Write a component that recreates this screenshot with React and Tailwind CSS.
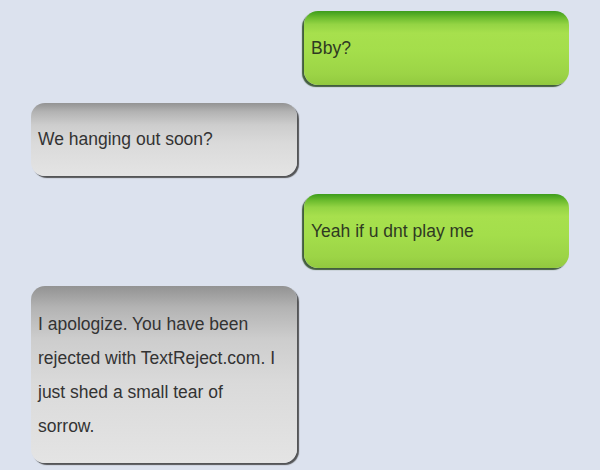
export default function App() {
  const green =
    "ml-[304px] w-[265px] rounded-[14px] flex items-center pl-[7px] pr-2 text-[#2f3a22] shadow-[-2px_2px_1px_rgba(40,70,30,0.85)] bg-[linear-gradient(to_bottom,#3d9c1c_0%,#6cbc2e_9%,#94d444_18%,#a7e04d_30%,#a4de4b_55%,#9cd446_85%,#92c93f_100%)]";
  const gray =
    "ml-[31px] w-[266px] rounded-[14px] flex items-center pl-[7px] pr-2 text-[#333] shadow-[2px_2px_1px_rgba(60,60,60,0.85)] bg-[linear-gradient(to_bottom,#939393_0%,#b3b3b3_12%,#cdcdcd_30%,#dadada_55%,#e4e4e4_100%)]";
  return (
    <div
      className="w-[600px] h-[470px] bg-[#dce2ee] overflow-hidden flex flex-col gap-[18px] pt-[11px] text-[17.5px]"
      style={{ fontFamily: '"Liberation Sans", Arial, sans-serif' }}
    >
      <div className={green + " h-[74px]"}>Bby?</div>
      <div className={gray + " h-[73px]"}>We hanging out soon?</div>
      <div className={green + " h-[74px]"}>Yeah if u dnt play me</div>
      <div className={gray + " h-[177px]"}>
        <div className="leading-[34px]">
          <div>I apologize. You have been</div>
          <div>rejected with TextReject.com. I</div>
          <div>just shed a small tear of</div>
          <div>sorrow.</div>
        </div>
      </div>
    </div>
  );
}
